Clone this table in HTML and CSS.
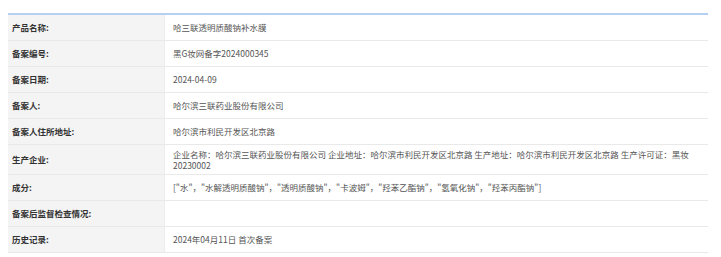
FILE: index.html
```html
<!DOCTYPE html>
<html lang="zh-CN">
<head>
<meta charset="utf-8">
<link rel="stylesheet" href="styles.css">
</head>
<body>
<div class="detail">
  <div class="row"><div class="label">产品名称:</div><div class="value">哈三联透明质酸钠补水膜</div></div>
  <div class="row"><div class="label">备案编号:</div><div class="value">黑G妆网备字2024000345</div></div>
  <div class="row"><div class="label">备案日期:</div><div class="value">2024-04-09</div></div>
  <div class="row"><div class="label">备案人:</div><div class="value">哈尔滨三联药业股份有限公司</div></div>
  <div class="row"><div class="label">备案人住所地址:</div><div class="value">哈尔滨市利民开发区北京路</div></div>
  <div class="row"><div class="label">生产企业:</div><div class="value">企业名称：哈尔滨三联药业股份有限公司 企业地址：哈尔滨市利民开发区北京路 生产地址：哈尔滨市利民开发区北京路 生产许可证：黑妆20230002</div></div>
  <div class="row"><div class="label">成分:</div><div class="value">["水"，"水解透明质酸钠"，"透明质酸钠"，"卡波姆"，"羟苯乙酯钠"，"氢氧化钠"，"羟苯丙酯钠"]</div></div>
  <div class="row"><div class="label">备案后监督检查情况:</div><div class="value"></div></div>
  <div class="row"><div class="label">历史记录:</div><div class="value">2024年04月11日 首次备案</div></div>
</div>
</body>
</html>
```
FILE: styles.css
```css
html, body {
  margin: 0;
  padding: 0;
  background: #fff;
}
body {
  padding: 13px 13px 0 8px;
  font-family: "Noto Sans CJK SC", "Noto Sans", sans-serif;
  font-size: 8.5px;
}
.detail {
  width: 700px;
  border-top: 2px solid #b5d0f2;
}
.row {
  display: grid;
  grid-template-columns: 156px 1fr;
  border-bottom: 1px solid #e9e9e9;
}
.label, .value {
  min-height: 25px;
  box-sizing: border-box;
  padding: 4px 8px 4px 4px;
  line-height: 10.5px;
  display: flex;
  align-items: center;
}
.label {
  background: #f4f4f4;
  color: #333;
  font-weight: bold;
}
.value {
  color: #555;
  padding-left: 8px;
  padding-right: 8px;
  border-left: 1px solid #ececec;
}
```
